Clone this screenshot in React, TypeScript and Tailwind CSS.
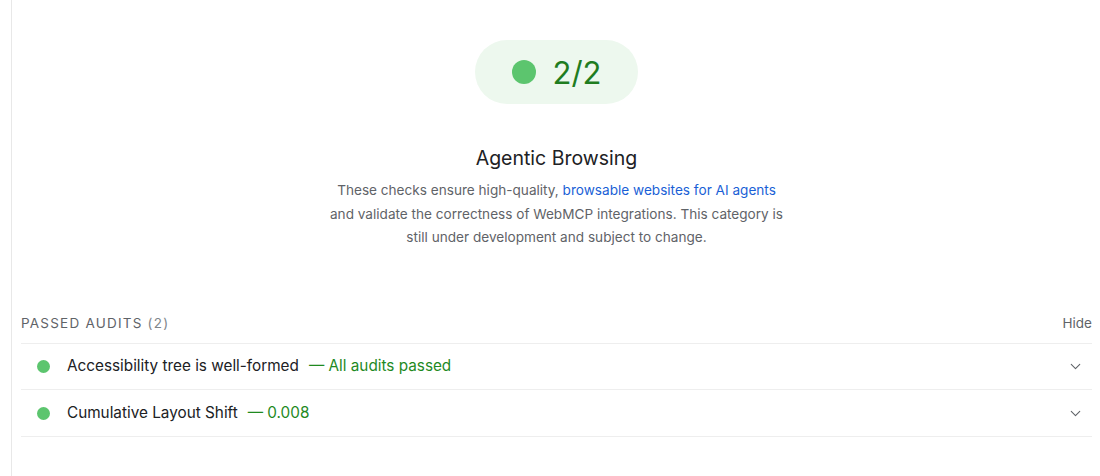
import { ChevronDown } from 'lucide-react'

const audits = [
  { title: 'Accessibility tree is well-formed', value: 'All audits passed' },
  { title: 'Cumulative Layout Shift', value: '0.008' },
]

export default function App() {
  return (
    <div
      className="h-[476px] w-[1100px] bg-white text-[#202124] overflow-hidden"
      style={{ fontFamily: 'Inter, "Noto Sans", sans-serif' }}
    >
      <div className="ml-[11px] h-full border-l border-[#e8e8e8] pl-[9px] pr-[8px]">
        {/* Gauge */}
        <div className="flex flex-col items-center pt-[40px]">
          <div className="flex h-[64px] w-[163px] items-center justify-center gap-[17px] rounded-full bg-[#edf8ee]">
            <span className="h-[24px] w-[24px] rounded-full bg-[#5cc56e]" />
            <span className="text-[31px] leading-none text-[#1f7d1f]">2/2</span>
          </div>
          <h2 className="mt-[41px] text-[19.5px] leading-[26px] text-[#202124]">Agentic Browsing</h2>
          <p className="mt-[8px] w-[460px] text-center text-[13.6px] leading-[23.5px] text-[#5f6368]">
            These checks ensure high-quality,{' '}
            <a className="text-[#1a5fd6]">browsable websites for AI agents</a> and validate the
            correctness of WebMCP integrations. This category is still under development and
            subject to change.
          </p>
        </div>

        {/* Passed audits */}
        <div className="mt-[63px]">
          <div className="flex items-center justify-between pb-[10px] text-[13.5px]">
            <span className="tracking-[0.09em] text-[#5f6368]">
              PASSED AUDITS <span className="text-[#80868b]">(2)</span>
            </span>
            <span className="text-[#5f6368]">Hide</span>
          </div>
          <div className="border-t border-[#eeeeee]">
            {audits.map((a) => (
              <div
                key={a.title}
                className="flex h-[46.5px] items-center border-b border-[#eeeeee] pl-[16px] pr-[8px]"
              >
                <span className="h-[13px] w-[13px] rounded-full bg-[#5cc56e]" />
                <span className="ml-[17px] text-[15.3px] text-[#202124]">{a.title}</span>
                <span className="ml-[10px] text-[15.3px] text-[#1f8a1f]">— {a.value}</span>
                <ChevronDown className="ml-auto h-[17px] w-[17px] text-[#5f6368]" strokeWidth={1.5} />
              </div>
            ))}
          </div>
        </div>
      </div>
    </div>
  )
}
